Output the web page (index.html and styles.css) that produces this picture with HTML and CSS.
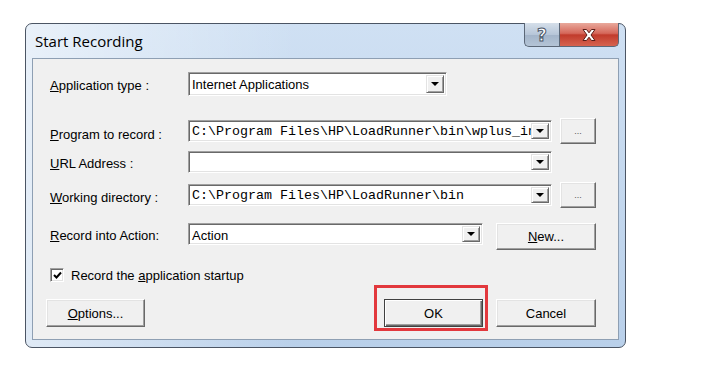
FILE: index.html
```html
<!DOCTYPE html>
<html lang="en">
<head>
    <meta charset="UTF-8">
    <title>Start Recording</title>
    <link rel="stylesheet" href="styles.css">
</head>
<body>

    <!-- Dialog window -->
    <div class="window">
        <div class="titlebar">
            <span class="title">Start Recording</span>
            <div class="caption-buttons">
                <div class="cap-btn help">?</div>
                <div class="cap-btn close">
                    <svg width="16" height="14" viewBox="0 0 16 14">
                        <path d="M2 1.5 L5.5 1.5 L8 4.8 L10.5 1.5 L14 1.5 L10 7 L14 12.5 L10.5 12.5 L8 9.2 L5.5 12.5 L2 12.5 L6 7 Z" fill="#fff" stroke="#5a1d17" stroke-width="1" stroke-linejoin="round"/>
                    </svg>
                </div>
            </div>
        </div>

        <div class="client">
            <div class="row row-type">
                <label class="label"><u>A</u>pplication type :</label>
                <div class="combo combo-type tall">
                    <span class="combo-text">Internet Applications</span>
                    <span class="arrow"></span>
                </div>
            </div>

            <div class="row row-program">
                <label class="label lower"><u>P</u>rogram to record :</label>
                <div class="combo combo-wide">
                    <span class="combo-text mono">C:\Program Files\HP\LoadRunner\bin\wplus_init_wsock.exe</span>
                    <span class="arrow"></span>
                </div>
                <button class="btn browse">...</button>
            </div>

            <div class="row row-url">
                <label class="label"><u>U</u>RL Address :</label>
                <div class="combo combo-wide">
                    <span class="combo-text"></span>
                    <span class="arrow"></span>
                </div>
            </div>

            <div class="row row-dir">
                <label class="label low"><u>W</u>orking directory :</label>
                <div class="combo combo-wide">
                    <span class="combo-text mono">C:\Program Files\HP\LoadRunner\bin</span>
                    <span class="arrow"></span>
                </div>
                <button class="btn browse">...</button>
            </div>

            <div class="row row-action">
                <label class="label"><u>R</u>ecord into Action:</label>
                <div class="combo combo-action">
                    <span class="combo-text">Action</span>
                    <span class="arrow"></span>
                </div>
                <button class="btn btn-new"><u>N</u>ew...</button>
            </div>

            <div class="row row-check">
                <span class="checkbox">
                    <svg width="9" height="9" viewBox="0 0 9 9">
                        <path d="M1 4 L3.5 6.5 L8 1.5" fill="none" stroke="#000" stroke-width="2"/>
                    </svg>
                </span>
                <span>Record the <u>a</u>pplication startup</span>
            </div>

            <div class="row row-buttons">
                <button class="btn btn-dialog"><u>O</u>ptions...</button>
                <div class="highlight">
                    <button class="btn btn-dialog default">OK</button>
                </div>
                <button class="btn btn-dialog btn-cancel">Cancel</button>
            </div>
        </div>
    </div>

</body>
</html>
```

FILE: styles.css
```css
body {
    margin: 0;
    padding: 23px 0 0 25px;
    background: #ffffff;
    font-family: "Liberation Sans", Arial, sans-serif;
    font-size: 13px;
    color: #000;
}

.window {
    box-sizing: border-box;
    width: 601px;
    height: 325px;
    border: 1px solid #4b5564;
    border-radius: 7px;
    padding: 0 6px 7px 6px;
    display: flex;
    flex-direction: column;
    background:
        linear-gradient(to right, rgba(255, 255, 255, 0.55), rgba(255, 255, 255, 0) 45%),
        linear-gradient(to bottom, #cfe0f3, #b9d0ea);
}

.titlebar {
    height: 34px;
    display: flex;
    align-items: center;
}

.title {
    font-family: "Open Sans", "Noto Sans", sans-serif;
    font-size: 15px;
    padding-left: 3px;
    color: #000;
}

.caption-buttons {
    margin-left: auto;
    align-self: flex-start;
    margin-top: -1px;
    display: flex;
}

.cap-btn {
    box-sizing: border-box;
    height: 24px;
    border: 1px solid #5b6777;
    border-top: none;
    display: flex;
    align-items: center;
    justify-content: center;
}

.help {
    width: 35px;
    border-right: none;
    border-radius: 0 0 0 5px;
    background: linear-gradient(to bottom, #d5dfea, #b7c6d8 50%, #a3b4c9 51%, #b4c4d6);
    font-family: "DejaVu Sans", sans-serif;
    font-size: 17px;
    font-weight: bold;
    color: #fff;
    -webkit-text-stroke: 1px #4a5566;
}

.close {
    width: 60px;
    border-radius: 0 0 5px 0;
    background: linear-gradient(to bottom, #e9a99c, #d5675a 45%, #c13b2c 52%, #d6634f);
}

.client {
    flex: 1;
    box-sizing: border-box;
    border: 1px solid #8e9fb3;
    background: #f0f0f0;
    padding: 13px 0 0 13px;
    display: flex;
    flex-direction: column;
}

.row {
    display: flex;
    align-items: center;
}

.label {
    width: 138px;
    padding-left: 4px;
    padding-top: 3px;
}

.label.lower {
    padding-top: 6px;
}

.label.low {
    padding-top: 5px;
}

.row-type {
    height: 24px;
}

.row-program {
    height: 26px;
    margin-top: 22px;
}

.row-url {
    height: 22px;
    margin-top: 7px;
}

.row-dir {
    height: 27px;
    margin-top: 8px;
}

.row-action {
    height: 27px;
    margin-top: 15px;
    align-items: flex-start;
}

.row-action .label {
    padding-top: 5px;
}

.row-check {
    height: 20px;
    margin-top: 15px;
    padding-left: 4px;
    gap: 7px;
}

.row-buttons {
    height: 28px;
    margin-top: 14px;
}

/* combo boxes */
.combo {
    box-sizing: border-box;
    height: 22px;
    display: flex;
    background: #fff;
    border: 1px solid;
    border-color: #a0a0a0 #ffffff #ffffff #a0a0a0;
    box-shadow: inset 1px 1px #696969, inset -1px -1px #e3e3e3;
    padding: 2px;
}

.combo.tall {
    height: 24px;
}

.combo-type {
    width: 259px;
}

.combo-wide {
    width: 364px;
}

.combo-action {
    width: 295px;
}

.combo-text {
    flex: 1;
    overflow: hidden;
    white-space: nowrap;
    line-height: 18px;
    padding-top: 1px;
    padding-left: 1px;
}

.mono {
    font-family: "Liberation Mono", "Courier New", monospace;
    font-size: 13.33px;
    padding-top: 0;
}

.arrow {
    box-sizing: border-box;
    width: 18px;
    background: #f0f0f0;
    border: 1px solid;
    border-color: #e3e3e3 #696969 #696969 #e3e3e3;
    box-shadow: inset 1px 1px #fff, inset -1px -1px #a0a0a0;
    display: flex;
    align-items: center;
    justify-content: center;
}

.arrow::after {
    content: "";
    border-left: 4px solid transparent;
    border-right: 4px solid transparent;
    border-top: 4px solid #000;
}

/* buttons */
.btn {
    box-sizing: border-box;
    font-family: "Liberation Sans", Arial, sans-serif;
    font-size: 13px;
    color: #000;
    background: #f0f0f0;
    border: 1px solid;
    border-color: #ffffff #696969 #696969 #ffffff;
    box-shadow: inset -1px -1px #a0a0a0, inset 1px 1px #e3e3e3;
    padding: 0;
    border-radius: 0;
}

.browse {
    width: 36px;
    height: 26px;
    margin-left: 8px;
    font-size: 9px;
    color: #555;
}

.btn-new {
    width: 100px;
    height: 27px;
    margin-left: 13px;
}

.btn-dialog {
    width: 99px;
    height: 28px;
}

.btn-dialog.default {
    border-color: #404040;
    box-shadow: inset 1px 1px #fff, inset -1px -1px #696969, inset -2px -2px #a0a0a0;
}

.btn-cancel {
    width: 100px;
    margin-right: 22px;
}

.highlight {
    position: relative;
    margin-left: auto;
    margin-right: 13px;
    display: flex;
}

.highlight::after {
    content: "";
    position: absolute;
    left: -10px;
    top: -14px;
    right: -5px;
    bottom: -4px;
    border: 3px solid #e2383d;
}

/* checkbox */
.checkbox {
    box-sizing: border-box;
    width: 14px;
    height: 14px;
    background: #fff;
    border: 1px solid;
    border-color: #a0a0a0 #ffffff #ffffff #a0a0a0;
    box-shadow: inset 1px 1px #696969, inset -1px -1px #e3e3e3;
    display: flex;
    align-items: center;
    justify-content: center;
}
```
